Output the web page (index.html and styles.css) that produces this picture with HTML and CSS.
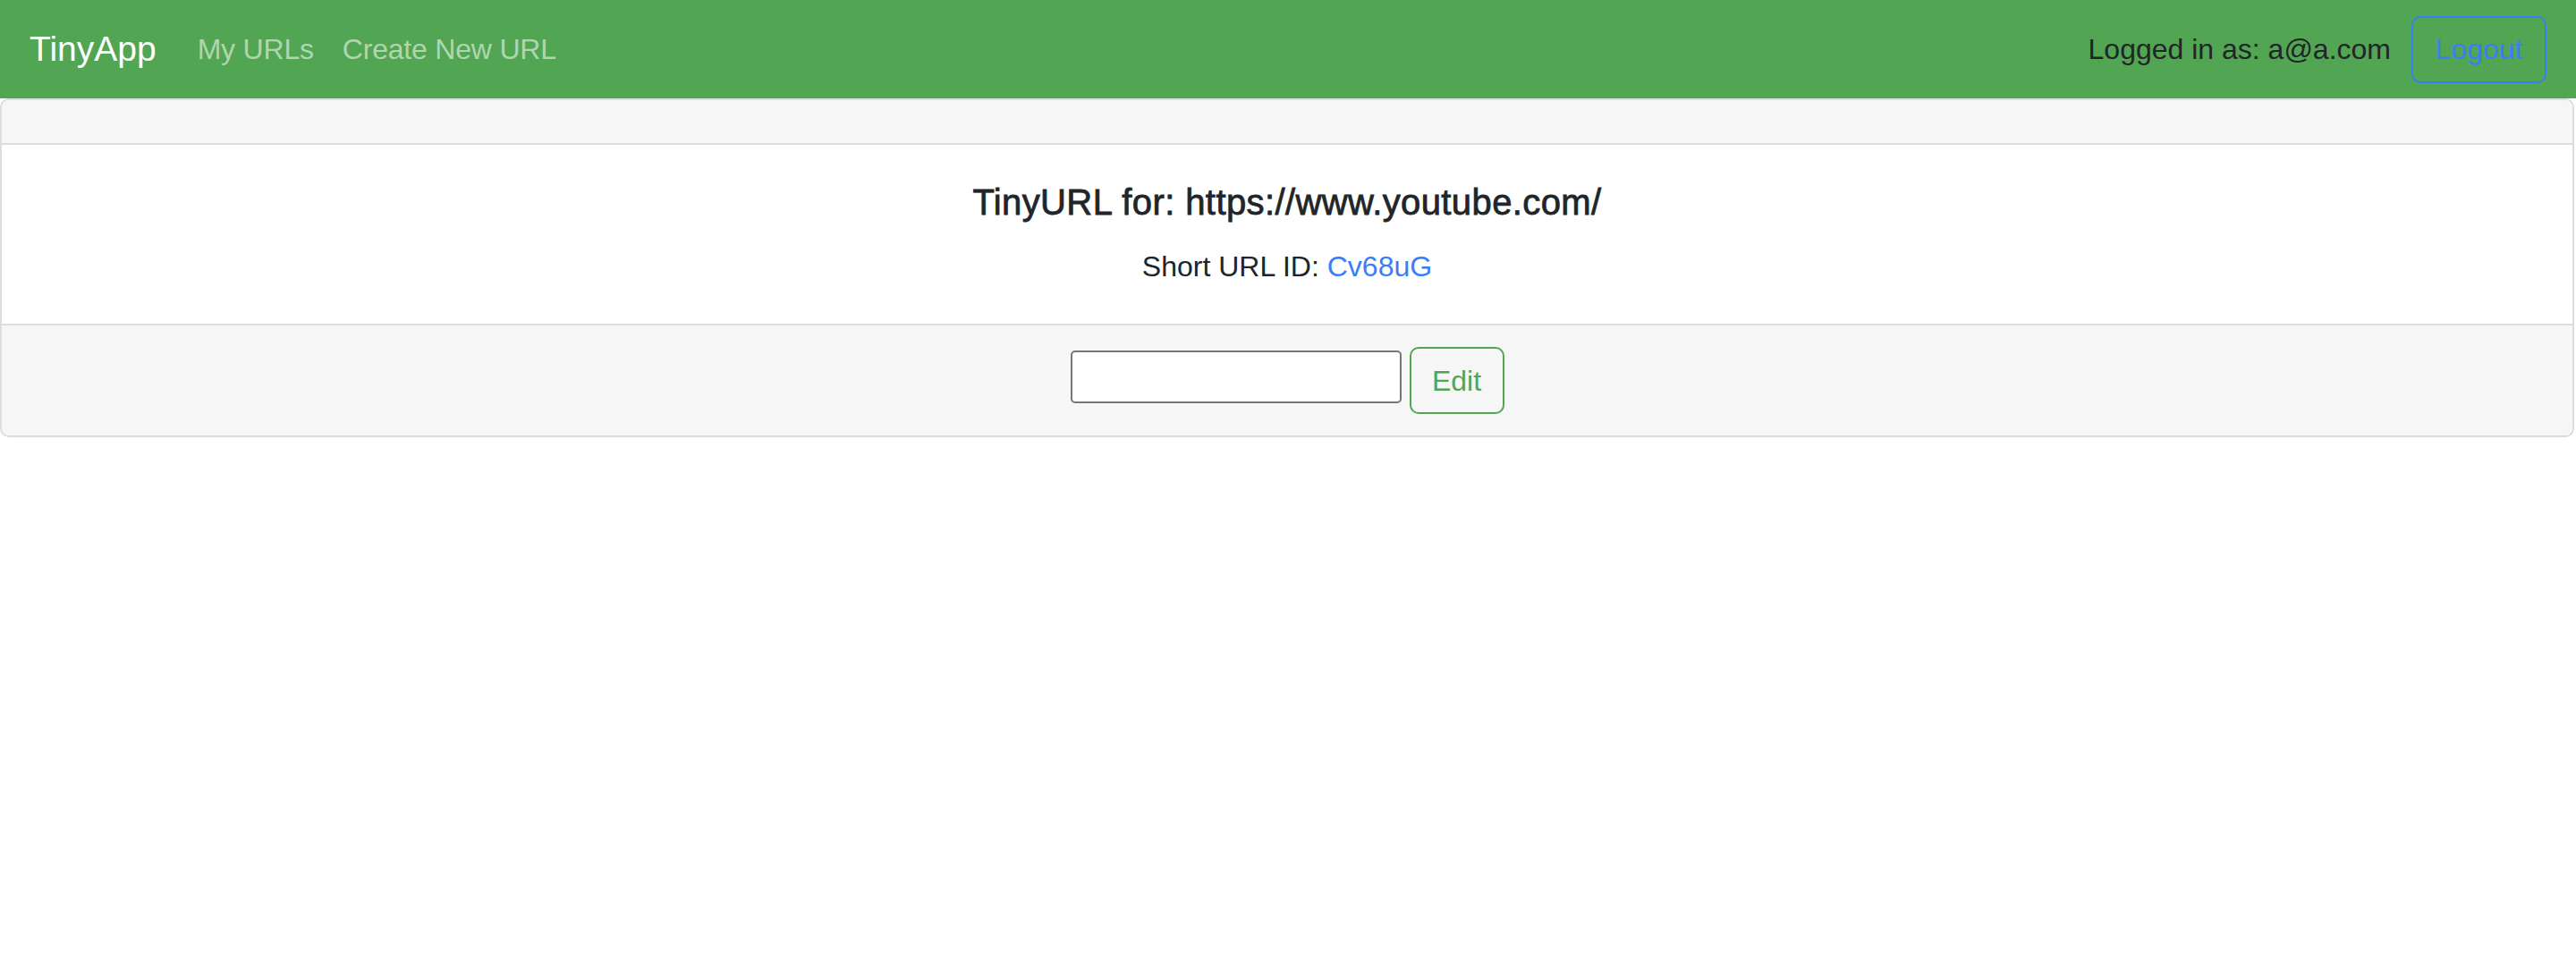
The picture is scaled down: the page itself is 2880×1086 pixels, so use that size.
FILE: index.html
```html
<!DOCTYPE html>
<html lang="en">
<head>
<meta charset="utf-8">
<title>TinyApp</title>
<link rel="stylesheet" href="styles.css">
</head>
<body>
<nav class="navbar">
  <a class="brand" href="#">TinyApp</a>
  <div class="nav-links">
    <a class="nav-link" href="#">My URLs</a>
    <a class="nav-link" href="#">Create New URL</a>
  </div>
  <div class="nav-right">
    <span class="user">Logged in as: a@a.com</span>
    <button class="btn btn-logout" type="button">Logout</button>
  </div>
</nav>
<main class="card">
  <div class="card-header"></div>
  <div class="card-body">
    <h5 class="card-title">TinyURL for: https://www.youtube.com/</h5>
    <p class="card-text">Short URL ID: <a class="link" href="#">Cv68uG</a></p>
  </div>
  <div class="card-footer">
    <form class="edit-form">
      <input class="url-input" type="text">
      <button class="btn btn-edit" type="button">Edit</button>
    </form>
  </div>
</main>
</body>
</html>
```

FILE: styles.css
```css
* { box-sizing: border-box; }
html, body { margin: 0; padding: 0; }
body {
  font-family: "Liberation Sans", Arial, sans-serif;
  font-size: 32px;
  line-height: 1.5;
  color: #212529;
  background: #fff;
  width: 2880px;
}
a { text-decoration: none; }

.navbar {
  display: flex;
  align-items: center;
  height: 110px;
  padding: 0 33px;
  background: #52a552;
}
.brand {
  color: #fff;
  font-size: 39px;
  line-height: 60px;
  margin-right: 30px;
}
.nav-links { display: flex; }
.nav-link {
  color: #b0d6b0;
  font-size: 32px;
  line-height: 48px;
  padding: 0 16px;
  letter-spacing: -0.2px;
}
.nav-right {
  margin-left: auto;
  display: flex;
  align-items: center;
  gap: 23px;
}
.user { color: #212529; line-height: 48px; }

.btn {
  font-family: inherit;
  font-size: 32px;
  line-height: 48px;
  padding: 12px 24px;
  border-radius: 10px;
  background: transparent;
  cursor: pointer;
}
.btn-logout {
  color: #3a7ef7;
  border: 2px solid #3a7ef7;
  width: 151px;
  height: 75px;
  padding: 0;
}

.card {
  display: block;
  margin-right: 2px;
  border: 2px solid #dcdcdc;
  border-radius: 10px;
  overflow: hidden;
}
.card-header {
  height: 50px;
  background: #f6f6f6;
  border-bottom: 2px solid #dcdcdc;
}
.card-body {
  padding: 40px;
  text-align: center;
}
.card-title {
  margin: 0 0 24px;
  font-size: 40px;
  line-height: 48px;
  font-weight: 500;
  letter-spacing: 0.4px;
  -webkit-text-stroke: 0.8px #212529;
}
.card-text {
  margin: 0;
  font-size: 32px;
  line-height: 48px;
}
.link { color: #3a7ef7; }

.card-footer {
  padding: 24px 40px;
  background: #f6f6f6;
  border-top: 2px solid #dcdcdc;
}
.edit-form {
  display: flex;
  justify-content: center;
  align-items: center;
  gap: 9px;
}
.url-input {
  width: 370px;
  height: 59px;
  margin-bottom: 8px;
  border: 2px solid #767676;
  border-radius: 5px;
  background: #fff;
  font-size: 27px;
  padding: 2px 4px;
}
.btn-edit {
  color: #52a552;
  border: 2px solid #52a552;
  width: 106px;
  height: 75px;
  padding: 0;
}
```
